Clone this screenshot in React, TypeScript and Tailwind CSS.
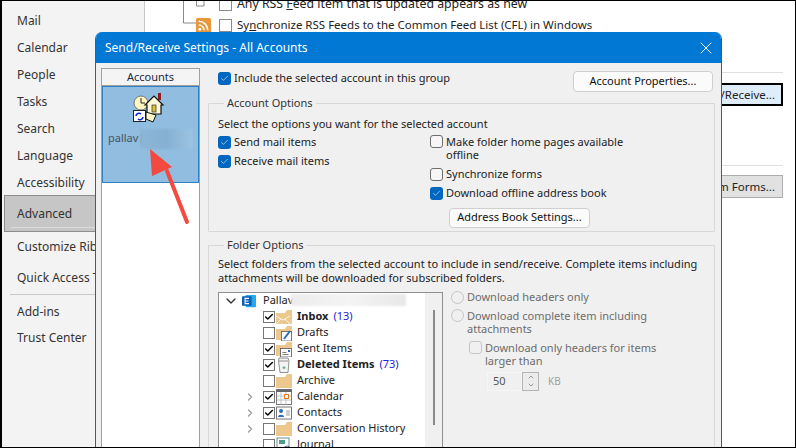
import { Check, ChevronDown, ChevronRight, X, ChevronUp } from 'lucide-react';

const navTop = ['Mail', 'Calendar', 'People', 'Tasks', 'Search', 'Language', 'Accessibility'];

function BlueCheck() {
  return (
    <span className="flex h-[13px] w-[13px] shrink-0 items-center justify-center rounded-[3px] bg-[#0067c0]">
      <Check className="h-[9px] w-[9px] text-white" strokeWidth={1.5} />
    </span>
  );
}

function EmptyCheck() {
  return <span className="h-[13px] w-[13px] shrink-0 rounded-[3px] border border-[#6e6e6e] bg-[#f6f6f6]" />;
}

function Folder({ children }: { children?: React.ReactNode }) {
  return (
    <svg viewBox="0 0 16 16" className="h-4 w-4 shrink-0">
      <path d="M0 4h9l2-3h5v14H0z" fill="#ecc88e" />
      {children}
    </svg>
  );
}

function TreeIcon({ kind }: { kind: string }) {
  if (kind === 'inbox')
    return (
      <Folder>
        <path d="M0 7l7 4 7-4M0 15l5-5M14 15l-5-5" fill="none" stroke="#fff" strokeWidth="0.8" />
      </Folder>
    );
  if (kind === 'drafts')
    return (
      <Folder>
        <rect x="5.5" y="6.5" width="10" height="9.5" fill="#fff" stroke="#555" strokeWidth="0.8" />
        <path d="M8 14l6-8" stroke="#2b6cb8" strokeWidth="2" />
      </Folder>
    );
  if (kind === 'sent')
    return (
      <Folder>
        <rect x="4.5" y="7.5" width="11" height="8.5" fill="#fff" stroke="#555" strokeWidth="0.8" />
        <path d="M6.5 11.5h4M6.5 13.5h6" stroke="#555" strokeWidth="0.8" />
        <rect x="12" y="9" width="2" height="2" fill="#2b6cb8" />
      </Folder>
    );
  if (kind === 'deleted')
    return (
      <svg viewBox="0 0 16 16" className="h-4 w-4 shrink-0">
        <path d="M3 1h9l1 3-1 11.5H4L2.500 4z" fill="#f4f4f4" stroke="#777" strokeWidth="0.8" />
        <path d="M3 4h9" stroke="#777" strokeWidth="0.8" />
        <path d="M6 11l2-2 2 2-2 1z" fill="#6cb59a" />
      </svg>
    );
  if (kind === 'calendar')
    return (
      <svg viewBox="0 0 16 16" className="h-4 w-4 shrink-0">
        <rect x="0.500" y="0.500" width="15" height="15" fill="#fff" stroke="#777" />
        <rect x="0.500" y="0.500" width="15" height="2.500" fill="#666" />
        <path d="M5 3v13M10 3v13M1 7h14M1 11h14" stroke="#aaa" strokeWidth="0.7" />
        <rect x="8.500" y="5.500" width="4" height="4" fill="#fff" stroke="#e07b20" />
      </svg>
    );
  if (kind === 'contacts')
    return (
      <svg viewBox="0 0 16 16" className="h-4 w-4 shrink-0">
        <rect x="0.500" y="2" width="15" height="12" fill="#fff" stroke="#777" />
        <circle cx="5" cy="6" r="2" fill="#2b6cb8" />
        <path d="M2 12c0-3 6-3 6 0z" fill="#2b6cb8" />
        <path d="M10 6h4M10 8h4M10 10h4" stroke="#888" strokeWidth="0.8" />
      </svg>
    );
  if (kind === 'journal')
    return (
      <svg viewBox="0 0 16 16" className="h-4 w-4 shrink-0">
        <rect x="1" y="1" width="12" height="14" fill="#fff" stroke="#6a8f8a" />
        <rect x="3" y="3" width="6" height="4" fill="#4d9c8c" />
        <circle cx="11" cy="12" r="3" fill="#fff" stroke="#4a6fa0" />
      </svg>
    );
  return <Folder />;
}

const treeRows = [
  { label: 'Inbox', count: '(13)', bold: true, checked: true, icon: 'inbox' },
  { label: 'Drafts', checked: false, icon: 'drafts' },
  { label: 'Sent Items', checked: true, icon: 'sent' },
  { label: 'Deleted Items', count: '(73)', bold: true, checked: true, icon: 'deleted' },
  { label: 'Archive', checked: false, icon: 'folder' },
  { label: 'Calendar', checked: true, icon: 'calendar', expand: true },
  { label: 'Contacts', checked: true, icon: 'contacts', expand: true },
  { label: 'Conversation History', checked: false, icon: 'folder', expand: true },
  { label: 'Journal', checked: false, icon: 'journal' },
];

function AccountIcon() {
  return (
    <svg viewBox="0 0 32 32" className="-ml-[4px] h-8 w-8">
      <circle cx="8" cy="11" r="7" fill="#fdf6c0" stroke="#777" />
      <path d="M8 6v5h4" stroke="#222" fill="none" />
      <path d="M25 1h3v7h-3z" fill="#8a1c1c" />
      <path d="M12 13l9-9 9 9h-2v9H14v-9z" fill="#fff8d8" stroke="#111" strokeWidth="1.2" />
      <rect x="19" y="13" width="4" height="7" fill="#d9c23a" stroke="#333" strokeWidth="0.7" />
      <rect x="0.500" y="18.500" width="12" height="11" fill="#fff" stroke="#223" />
      <path d="M3 24a3 3 0 0 1 5-2M10 25a3 3 0 0 1-5 2" fill="none" stroke="#0a2ad0" strokeWidth="1.6" />
      <path d="M13 20l10 3-3 7-7-3z" fill="#fff8c8" stroke="#111" />
    </svg>
  );
}

export default function App() {
  return (
    <div className="relative flex h-[448px] w-[796px] overflow-hidden border border-l-2 border-black bg-white font-['Noto_Sans',sans-serif] text-[11px] text-[#222]">
      {/* Options sidebar */}
      <div className="flex w-[143px] shrink-0 flex-col border-r border-[#c8c8c8] bg-[#f3f3f3] pt-[6px] text-[12px] text-[#333]">
        {navTop.map((item) => (
          <div key={item} className="flex h-[27px] shrink-0 items-center pl-[15px]">{item}</div>
        ))}
        <div className="relative mt-[-1px] ml-[2px] flex h-[37px] shrink-0 items-center border border-r-0 border-[#8c8c8c] bg-[#c6c6c6] pl-[12px]">
          Advanced
          <div className="absolute right-0 bottom-[3px] left-[6px] h-px bg-[#dcdcdc]" />
        </div>
        <div className="flex h-[30px] shrink-0 items-center whitespace-nowrap pl-[15px]">Customize Ribbon</div>
        <div className="flex h-[32px] shrink-0 items-center whitespace-nowrap pl-[15px]">Quick Access Toolbar</div>
        <div className="ml-[8px] h-px shrink-0 bg-[#c8c8c8]" />
        <div className="flex h-[33px] shrink-0 items-center pl-[15px]">Add-ins</div>
        <div className="flex h-[20px] shrink-0 items-center pl-[15px]">Trust Center</div>
      </div>

      {/* Options page behind the dialog */}
      <div className="relative flex min-w-0 flex-1 flex-col text-[12px]">
        <svg viewBox="0 0 30 26" className="absolute top-[-1px] left-[38px] h-[26px] w-[30px]">
          <path d="M0.500 0v23H13" fill="none" stroke="#8a8a8a" />
          <path d="M13.500 0v6h7.500V0" fill="#fff" stroke="#8a8a8a" />
        </svg>
        <div className="flex h-[6px] items-center pl-[74px]">
          <span className="h-[13px] w-[13px] shrink-0 border border-[#8a8a8a]" />
          <span className="ml-[5px] text-[12.300px] whitespace-nowrap">Any RSS <u>F</u>eed item that is updated appears as new</span>
        </div>
        <div className="mt-[5px] flex h-[26px] items-center pl-[51px]">
          <svg viewBox="0 0 14 14" className="h-[15px] w-[15px] shrink-0">
            <rect width="14" height="14" rx="1.500" fill="#e8963a" />
            <circle cx="3.500" cy="10.500" r="1.400" fill="#fff" />
            <path d="M2.500 6.500a5 5 0 0 1 5 5M2.500 3a8.500 8.500 0 0 1 8.500 8.500" fill="none" stroke="#fff" strokeWidth="1.500" />
          </svg>
          <span className="ml-[8px] h-[13px] w-[13px] shrink-0 border border-[#8a8a8a]" />
          <span className="ml-[5px] text-[11.500px] whitespace-nowrap">Sy<u>n</u>chronize RSS Feeds to the Common Feed List (CFL) in Windows</span>
        </div>
        <div className="mt-[34px] h-px w-[638px] bg-[#e0e0e0]" />
        <div className="mt-[10px] flex justify-end pr-[12px]">
          <div className="flex h-[23px] w-[63px] items-center justify-end overflow-hidden border-[2px] border-black bg-[#dfecf9] pr-[6px] text-[11.500px] whitespace-nowrap">/Receive...</div>
        </div>
        <div className="mt-[59px] h-px w-[638px] bg-[#e0e0e0]" />
        <div className="mt-[9px] flex justify-end pr-[12px]">
          <div className="flex h-[23px] w-[63px] items-center justify-end overflow-hidden border border-[#adadad] bg-[#e1e1e1] pr-[7px] text-[11.500px] whitespace-nowrap">m Forms...</div>
        </div>
      </div>

      {/* Send/Receive dialog */}
      <div className="absolute top-[31px] left-[93px] flex h-[420px] w-[627px] flex-col overflow-hidden rounded-t-[7px] border-x border-[#0a6cc0] bg-[#f0f0f0]">
        <div className="flex h-[31px] shrink-0 items-center justify-between bg-[#0078d4] pr-[5px] pl-[9px] text-[12px] text-white">
          <span>Send/Receive Settings - All Accounts</span>
          <X className="h-[20px] w-[20px]" strokeWidth={1.2} />
        </div>
        <div className="flex min-h-0 flex-1 pt-[5px] pl-[5px]">
          {/* Accounts list */}
          <div className="flex w-[99px] shrink-0 flex-col border border-b-0 border-[#a0a0a0] bg-white">
            <div className="flex h-[17px] shrink-0 items-center justify-center border-b border-[#a0a0a0] bg-[#f4f4f4] text-[#1a2a44]">Accounts</div>
            <div className="relative flex h-[97px] shrink-0 flex-col items-center border border-[#2f7fc4] bg-[#90bde0] pt-[5px]">
              <AccountIcon />
              <span className="mt-[6px] self-start pl-[5px] text-[#49525e]">pallav|</span>
              <div className="absolute top-[42px] left-[37px] h-[20px] w-[53px] bg-gradient-to-r from-[#8cb6d8] via-[#86b0d2] to-[#9cc4e2] blur-[1px]" />
            </div>
          </div>

          {/* Settings */}
          <div className="flex min-w-0 flex-1 flex-col pr-[6px] pl-[8px]">
            <div className="flex h-[24px] shrink-0 items-start justify-between pr-[2px] pl-[10px]">
              <div className="mt-[3px] flex h-[14px] items-center gap-[3px]">
                <BlueCheck />
                <span>Include the selected account in this group</span>
              </div>
              <button className="h-[21px] w-[140px] self-end rounded-[4px] border border-[#cfcfcf] bg-[#fbfbfb] text-[#111]">Account Properties...</button>
            </div>

            <fieldset className="mt-[3px] h-[137px] shrink-0 rounded-[1px] border border-[#d8d8d8] pr-[8px] pl-[9px]">
              <legend className="ml-[6px] px-[3px] text-[#333]">Account Options</legend>
              <div className="mt-[4px] leading-[16px]">Select the options you want for the selected account</div>
              <div className="mt-[4px] flex">
                <div className="flex w-[212px] shrink-0 flex-col gap-[5px]">
                  <div className="flex h-[14px] items-center gap-[3px]"><BlueCheck />Send mail items</div>
                  <div className="flex h-[14px] items-center gap-[3px]"><BlueCheck />Receive mail items</div>
                </div>
                <div className="-mt-[1px] flex flex-col">
                  <div className="flex gap-[3px] leading-[13px]">
                    <EmptyCheck />
                    <span>Make folder home pages available<br />offline</span>
                  </div>
                  <div className="mt-[7px] flex h-[14px] items-center gap-[3px]"><EmptyCheck />Synchronize forms</div>
                  <div className="mt-[5px] flex h-[14px] items-center gap-[3px]"><BlueCheck />Download offline address book</div>
                  <button className="mt-[7px] ml-[19px] h-[20px] w-[141px] rounded-[4px] border border-[#cfcfcf] bg-[#fbfbfb] text-[#111]">Address Book Settings...</button>
                </div>
              </div>
            </fieldset>

            <fieldset className="mt-[5px] min-h-0 flex-1 border border-[#d8d8d8] pr-[8px] pl-[9px]">
              <legend className="ml-[6px] px-[3px] text-[#333]">Folder Options</legend>
              <div className="mt-[3px] leading-[14px]">
                Select folders from the selected account to include in send/receive. Complete items including<br />
                attachments will be downloaded for subscribed folders.
              </div>
              <div className="mt-[7px] flex">
                {/* Folder tree */}
                <div className="relative flex h-[170px] w-[225px] shrink-0 border border-[#8f8f8f] bg-white">
                  <div className="min-w-0 flex-1 overflow-hidden">
                    <div className="relative flex h-[16px] items-center pl-[4px]">
                      <ChevronDown className="h-[16px] w-[16px] text-[#333]" strokeWidth={2} />
                      <svg viewBox="0 0 16 16" className="ml-[3px] h-[14px] w-[14px] shrink-0">
                        <rect x="4" y="1" width="12" height="14" rx="1" fill="#28a8ea" />
                        <rect width="11" height="11" y="2.500" rx="1" fill="#0a5fb4" />
                        <path d="M8 5H3.500v6H8M3.500 8H7.500" stroke="#fff" strokeWidth="1.200" fill="none" />
                      </svg>
                      <span className="ml-[7px]">Pallav</span>
                      <div className="absolute top-[1px] left-[72px] h-[12px] w-[115px] bg-gradient-to-r from-[#ececec] via-[#f4f4f4] to-[#e8e8e8] blur-[1px]" />
                    </div>
                    {treeRows.map((row) => (
                      <div key={row.label} className="flex h-[16px] items-center pl-[27px] whitespace-nowrap">
                        <span className="-ml-[2px] flex w-[19px] shrink-0 items-center">
                          {row.expand && <ChevronRight className="h-[12px] w-[12px] text-[#999]" strokeWidth={2.500} />}
                        </span>
                        <span className="flex h-[12px] w-[12px] shrink-0 items-center justify-center border border-[#777] bg-white">
                          {row.checked && <Check className="h-[10px] w-[10px] text-black" strokeWidth={3.500} />}
                        </span>
                        <span className="mr-[5px] ml-[1px]"><TreeIcon kind={row.icon} /></span>
                        <span className={row.bold ? 'font-bold' : ''}>{row.label}</span>
                        {row.count && <span className="ml-[5px] text-[#2222dd]">{row.count}</span>}
                      </div>
                    ))}
                  </div>
                  <div className="flex w-[17px] shrink-0 justify-center bg-[#f0f0f0] pt-[17px]">
                    <div className="h-[115px] w-[2px] bg-[#8a8a8a]" />
                  </div>
                </div>

                {/* Download choices */}
                <div className="-mt-[1px] ml-[8px] flex flex-col text-[#6d6d6d]">
                  <div className="flex h-[14px] items-center gap-[3px]">
                    <span className="h-[13px] w-[13px] shrink-0 rounded-full border border-[#c4c4c4] bg-[#f0f0f0]" />
                    Download headers only
                  </div>
                  <div className="mt-[4px] flex gap-[3px] leading-[13px]">
                    <span className="h-[13px] w-[13px] shrink-0 rounded-full border border-[#c4c4c4] bg-[#f0f0f0]" />
                    <span>Download complete item including<br />attachments</span>
                  </div>
                  <div className="mt-[6px] ml-[18px] flex gap-[3px] leading-[13px]">
                    <span className="h-[13px] w-[13px] shrink-0 rounded-[3px] border border-[#c4c4c4] bg-[#f0f0f0]" />
                    <span>Download only headers for items<br />larger than</span>
                  </div>
                  <div className="mt-[5px] ml-[36px] flex items-center">
                    <div className="flex h-[19px] w-[52px] items-stretch">
                      <div className="flex flex-1 items-center border border-[#f6f6f6] pl-[5px] text-[#555]">50</div>
                      <div className="flex w-[17px] flex-col items-center justify-center border border-[#b4b4b4] bg-[#ececec] text-[#999]">
                        <ChevronUp className="h-[8px] w-[8px]" strokeWidth={3} />
                        <ChevronDown className="h-[8px] w-[8px]" strokeWidth={3} />
                      </div>
                    </div>
                    <span className="ml-[9px] text-[10px] text-[#a0a0a0]">KB</span>
                  </div>
                </div>
              </div>
            </fieldset>
          </div>
        </div>
      </div>

      {/* Annotation arrow */}
      <svg viewBox="0 0 796 448" className="pointer-events-none absolute top-[-1px] left-[-2px] h-[448px] w-[796px]">
        <path d="M167 171L187 222" stroke="#f4493e" strokeWidth="4" strokeLinecap="round" />
        <path d="M150 149L152 176L172 167z" fill="#f4493e" />
      </svg>
    </div>
  );
}
